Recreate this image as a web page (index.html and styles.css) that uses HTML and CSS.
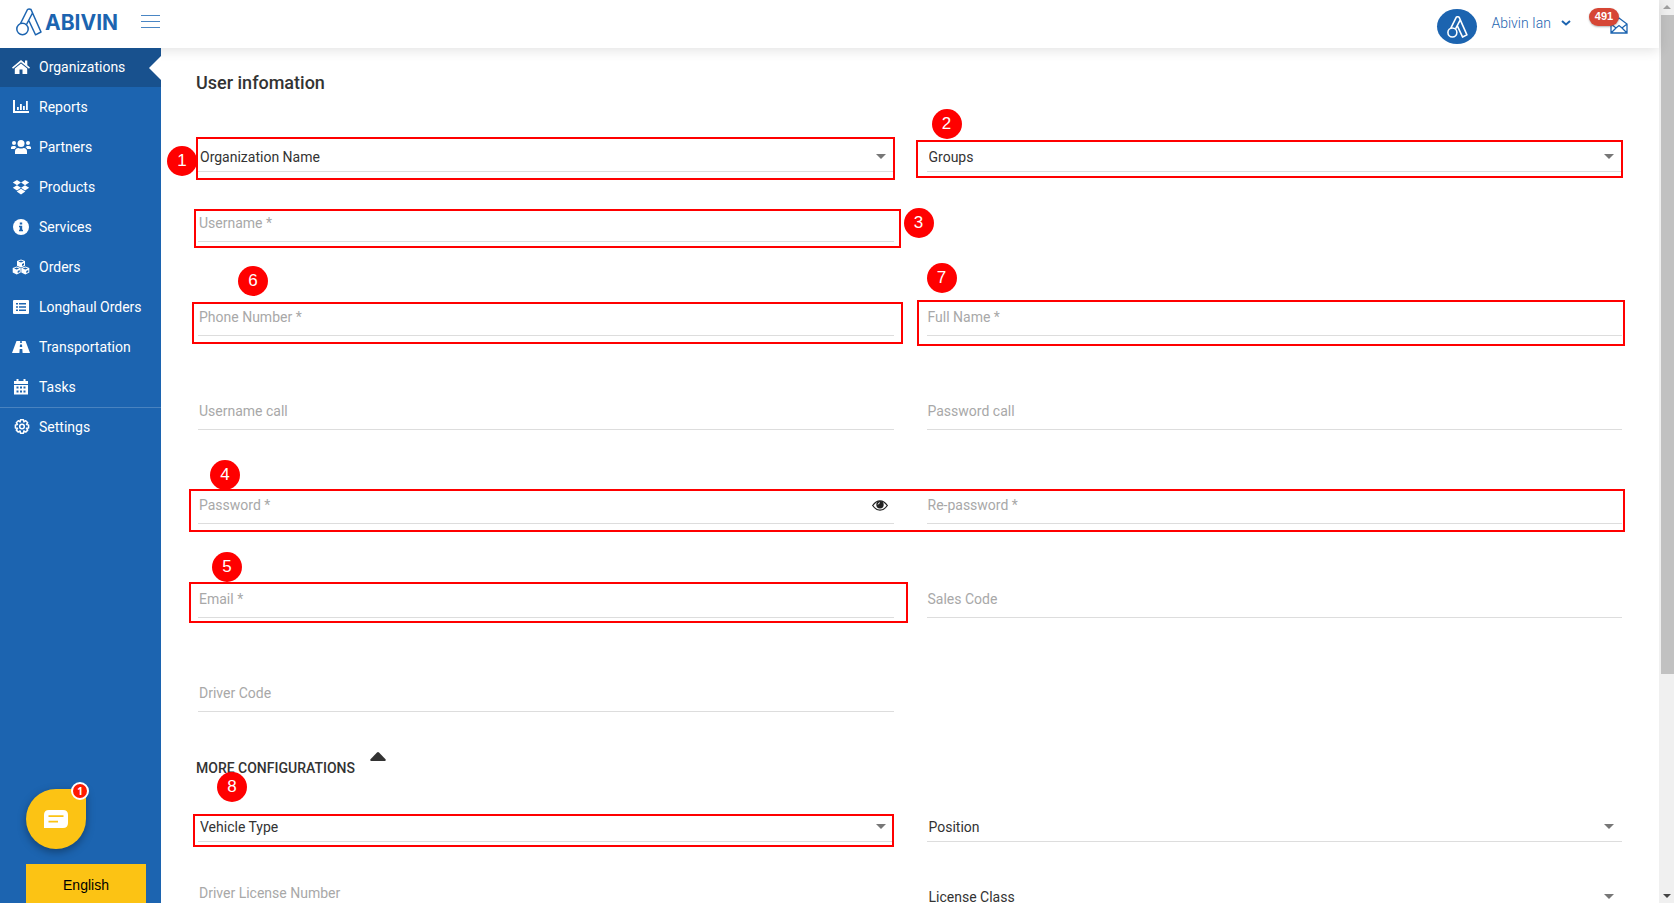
FILE: index.html
```html
<!DOCTYPE html>
<html lang="en">
<head>
<meta charset="utf-8">
<title>Abivin - User information</title>
<link rel="stylesheet" href="styles.css">
</head>
<body>
<div class="page">
  <header class="header">
    <a class="brand" href="#" aria-label="Abivin">
      <svg class="brand-mark" viewBox="0 0 26 28"><g fill="none" stroke="currentColor" stroke-width="1.500" stroke-linejoin="round"><circle cx="6.500" cy="21" r="5.700"/><path d="M4.500 15.500 11.500 1.500q1.500-1.200 3.500 0L25 24l-5.500 2.800L12.800 12.500M16.500 5 10.500 16.500"/></g></svg>
      <span>ABIVIN</span>
    </a>
    <button class="menu-toggle" type="button" aria-label="Toggle menu"><i></i><i></i><i></i></button>
    <div class="account">
      <span class="avatar"><svg viewBox="0 0 26 28"><g fill="none" stroke="currentColor" stroke-width="2" stroke-linejoin="round"><circle cx="6.500" cy="21" r="5.700"/><path d="M4.500 15.500 11.500 1.500q1.500-1.200 3.500 0L25 24l-5.500 2.800L12.800 12.500M16.500 5 10.500 16.500"/></g></svg></span>
      <button class="account-name" type="button">Abivin Ian <svg viewBox="0 0 10 6"><path d="M1 1l4 3.500L9 1" fill="none" stroke="currentColor" stroke-width="2"/></svg></button>
      <button class="inbox" type="button" aria-label="Messages">
        <svg viewBox="0 0 18 17"><path d="M1 7v9h16V7L9 1zM1 7l5 4 3-2.500 3 2.500 5-4M1 16l5-5M17 16l-5-5" fill="none" stroke="currentColor" stroke-width="1.300"/></svg>
        <span class="inbox-count">491</span>
      </button>
    </div>
  </header>

  <nav class="sidebar">
    <a class="nav-item active" href="#"><svg viewBox="0 0 18 16"><path d="M9 1 0 8.500l1 1.200L9 3.200l8 6.500 1-1.200-2.700-2.300V1.500h-2.300v2.700z"/><path d="M9 4.500 2.800 9.500V15h4.700v-4.500h3V15h4.700V9.500z"/></svg>Organizations</a>
    <a class="nav-item" href="#"><svg viewBox="0 0 18 16"><path d="M1 1h2v11h14v2H1zM5 8h1.800v3H5zM8 5h1.800v6H8zM11 7h1.800v4H11zM14 2h1.800v9H14z"/></svg>Reports</a>
    <a class="nav-item" href="#"><svg viewBox="0 0 20 16"><circle cx="10" cy="4.500" r="3.500"/><circle cx="3" cy="4" r="2"/><circle cx="17" cy="4" r="2"/><path d="M4 15v-2.500Q4 9 7.500 9q2.500 1 5 0Q16 9 16 12.500V15zM0 10V8.500Q0 7 2 7h2l1.500 1.200Q4 9 3.700 10zM20 10V8.500Q20 7 18 7h-2l-1.500 1.200q1.500.8 1.800 1.800z"/></svg>Partners</a>
    <a class="nav-item" href="#"><svg viewBox="0 0 18 16"><path d="M5 1l4 2.600L5 6.200.8 3.600zM13 1l4.200 2.600L13 6.200 9 3.600zM.8 8.800L5 6.200l4 2.600-4 2.600zM17.200 8.800L13 6.200 9 8.800l4 2.600zM9 9.700l4.300 2.900L9 15.500l-4.300-2.900z"/></svg>Products</a>
    <a class="nav-item" href="#"><svg viewBox="0 0 18 16"><circle cx="9" cy="8" r="8"/><path class="cut" d="M7.800 3.500h2.400v2H7.800zM7 6.700h3.200v4H11v1.500H7v-1.500h.8V8.200H7z"/></svg>Services</a>
    <a class="nav-item" href="#"><svg viewBox="0 0 18 16"><path d="M9 .5l4 1.600v4.600L9 8.500 5 6.700V2.100zM4.700 7.500l4 1.600v4.500l-4 1.900-4-1.900V9.100zM13.300 7.500l4 1.600v4.500l-4 1.900-4-1.900V9.100z"/><path class="cut" d="M9 1.500l2.700 1L9 3.600l-2.700-1.100zM4.700 8.600l2.600 1-2.600 1-2.600-1zM13.300 8.600l2.600 1-2.600 1-2.600-1zM10 5l2-1v2l-2 1zM5.700 12l2-1v2l-2 1zM14.300 12l2-1v2l-2 1z"/></svg>Orders</a>
    <a class="nav-item" href="#"><svg viewBox="0 0 18 16"><rect x="1" y="1" width="16" height="14" rx="1"/><path class="cut" d="M4 4h2v1.500H4zM7 4h7v1.500H7zM4 7.200h2v1.500H4zM7 7.200h7v1.500H7zM4 10.500h2V12H4zM7 10.500h7V12H7z"/></svg>Longhaul Orders</a>
    <a class="nav-item" href="#"><svg viewBox="0 0 18 16"><path d="M4.500 2h9L18 14h-7.500H7.500H0z"/><path class="cut" d="M8.300 2h1.400l.2 2H8.100zM8 5.500h2l.2 2.500H7.800zM7.700 10h2.600l.3 4H7.400z"/></svg>Transportation</a>
    <a class="nav-item" href="#"><svg viewBox="0 0 18 16"><path d="M2 2h2.500V0h2v2h5V0h2v2H16v3H2zM2 6h14v9.500H2z"/><path class="cut" d="M4.500 7.500h2v2h-2zM8 7.500h2v2H8zM11.500 7.500h2v2h-2zM4.500 11.500h2v2h-2zM8 11.500h2v2H8zM11.500 11.500h2v2h-2z"/></svg>Tasks</a>
    <a class="nav-item divided" href="#"><svg viewBox="0 0 18 16"><g fill="none" stroke="currentColor" stroke-width="1.500" stroke-linejoin="round"><path d="M8.500.8h3l.4 2.100 1.800-1.200 2 2-1.200 1.800 2.100.4v3l-2.100.4 1.200 1.800-2 2-1.800-1.200-.4 2.300h-3l-.4-2.300-1.800 1.200-2-2 1.200-1.800-2.100-.4v-3l2.100-.4-1.200-1.800 2-2 1.800 1.200z"/><circle cx="10" cy="7.500" r="2.300"/></g></svg>Settings</a>
    <div class="sidebar-tools">
      <button class="chat" type="button" aria-label="Chat"><svg viewBox="0 0 24 18"><path fill="#fff" d="M5 0h14q5 0 5 5v8q0 5-5 5H0V5q0-5 5-5z"/><path d="M4.500 6.200h15M4.500 11.700h9.500" stroke="#fcc314" stroke-width="1.800"/></svg><span class="chat-count">1</span></button>
      <button class="language" type="button">English</button>
    </div>
  </nav>

  <main class="content">
    <h1>User infomation</h1>
    <form class="form">
      <div class="row row-first">
        <div class="field select"><select aria-label="Organization Name"><option>Organization Name</option></select><span class="mark mark-1"></span><b class="step step-1">1</b></div>
        <div class="field select"><select aria-label="Groups"><option>Groups</option></select><span class="mark mark-2"></span><b class="step step-2">2</b></div>
      </div>
      <div class="row row-short">
        <div class="field"><label for="username">Username *</label><input id="username" type="text"><span class="mark mark-3"></span><b class="step step-3">3</b></div>
      </div>
      <div class="row">
        <div class="field"><label for="phone">Phone Number *</label><input id="phone" type="tel"><span class="mark mark-6"></span><b class="step step-6">6</b></div>
        <div class="field"><label for="fullname">Full Name *</label><input id="fullname" type="text"><span class="mark mark-7"></span><b class="step step-7">7</b></div>
      </div>
      <div class="row">
        <div class="field"><label for="usercall">Username call</label><input id="usercall" type="text"></div>
        <div class="field"><label for="passcall">Password call</label><input id="passcall" type="text"></div>
      </div>
      <div class="row">
        <div class="field"><label for="password">Password *</label><input id="password" type="password"><button class="reveal" type="button" aria-label="Show password"><svg viewBox="0 0 16 11"><path d="M.7 5.500Q4 .8 8 .8t7.300 4.700Q12 10.200 8 10.200T.7 5.500z" fill="none" stroke="currentColor" stroke-width="1.300"/><circle cx="8" cy="4.800" r="3.700"/><path d="M6 4.500Q6.200 3 8 2.700" fill="none" stroke="#fff" stroke-width=".9"/></svg></button><b class="step step-4">4</b></div>
        <div class="field"><label for="repassword">Re-password *</label><input id="repassword" type="password"></div>
        <span class="mark mark-4"></span>
      </div>
      <div class="row">
        <div class="field"><label for="email">Email *</label><input id="email" type="email"><span class="mark mark-5"></span><b class="step step-5">5</b></div>
        <div class="field"><label for="sales">Sales Code</label><input id="sales" type="text"></div>
      </div>
      <div class="row">
        <div class="field"><label for="driver">Driver Code</label><input id="driver" type="text"></div>
      </div>
      <h2><button class="collapse" type="button">MORE CONFIGURATIONS <svg viewBox="0 0 16 9"><path d="M7 .5q1-.8 2 0l6.500 6.800q.8 1.200-.5 1.700H1q-1.300-.5-.5-1.700z"/></svg></button></h2>
      <div class="row row-short">
        <div class="field select"><select aria-label="Vehicle Type"><option>Vehicle Type</option></select><span class="mark mark-8"></span><b class="step step-8">8</b></div>
        <div class="field select"><select aria-label="Position"><option>Position</option></select></div>
      </div>
      <div class="row row-short">
        <div class="field"><label for="license">Driver License Number</label><input id="license" type="text"></div>
        <div class="field select"><select aria-label="License Class"><option>License Class</option></select></div>
      </div>
    </form>
  </main>

  <div class="scrollbar" aria-hidden="true"><i class="arrow-up"></i><span class="thumb"></span><i class="arrow-down"></i></div>
</div>
</body>
</html>
```

FILE: styles.css
```css
* { box-sizing: border-box; }
body { margin: 0; font-family: Roboto, "Liberation Sans", sans-serif; font-size: 14px; color: #333; background: #fff; }
button { font: inherit; color: inherit; background: none; border: 0; padding: 0; }
a { color: inherit; text-decoration: none; }
svg { display: block; fill: currentColor; flex: none; }

.page {
  display: grid;
  grid-template: 48px 1fr / 161px 1fr 15px;
  height: 100vh;
  overflow: hidden;
}

/* Header */
.header {
  grid-area: 1 / 1 / 2 / 3;
  display: flex;
  z-index: 2;
  background: #fff;
  color: #1c64b0;
  box-shadow: 0 2px 12px rgba(0, 0, 0, .12);
}
.sidebar { z-index: 3; }
.brand { display: flex; align-items: center; gap: 3px; height: 44px; padding-left: 16px; font: 700 21px Inter, sans-serif; }
.brand-mark { width: 26px; height: 28px; }
.menu-toggle { display: flex; flex-direction: column; gap: 5px; width: 19px; margin: 15px 0 0 23px; }
.menu-toggle i { height: 1px; background: #4a86c4; }
.account { display: flex; margin-left: auto; padding-right: 31px; }
.avatar { display: grid; place-items: center; width: 40px; height: 35px; margin: 9px 14px 0 0; border-radius: 50%; background: #1c64b0; color: #fff; }
.avatar svg { width: 23px; height: 22px; }
.account-name { display: flex; align-items: center; gap: 10px; height: 46px; font-weight: 300; }
.account-name svg { width: 10px; height: 6px; }
.inbox { position: relative; width: 18px; height: 17px; margin: 17px 0 0 39px; }
.inbox-count { position: absolute; right: 9px; top: -9px; width: 30px; height: 18px; border-radius: 9px; background: #d64635; color: #fff; font: 700 11px/17px "Liberation Sans", sans-serif; box-shadow: 0 1px 2px rgba(0, 0, 0, .3); }

/* Sidebar */
.sidebar { grid-area: 2 / 1; display: flex; flex-direction: column; background: #1c64b0; color: #fff; }
.nav-item { display: flex; align-items: center; gap: 8px; height: 40px; padding-left: 11px; }
.nav-item svg { width: 20px; height: 16px; }
.nav-item .cut { fill: #1c64b0; }
.nav-item.active { position: relative; height: 39px; padding-bottom: 2px; background: #18518e; }
.nav-item.active::after { content: ""; position: absolute; right: 0; top: 8px; border: 12px solid transparent; border-left: 0; border-right-color: #fff; }
.nav-item.divided { padding-bottom: 2px; border-top: 1px solid #4983c0; }
.sidebar-tools { margin-top: auto; padding-left: 26px; }
.chat { position: relative; display: grid; place-items: center; width: 60px; height: 60px; border-radius: 50% 4px 50% 50%; background: #fcc314; box-shadow: 0 3px 8px rgba(0, 0, 0, .35); }
.chat svg { width: 24px; height: 18px; }
.chat-count { position: absolute; right: -3px; top: -7px; width: 18px; height: 18px; border: 2px solid #fff; border-radius: 50%; background: #ff1a00; color: #fff; font: 700 10px/14px "Open Sans", sans-serif; }
.language { width: 120px; height: 39px; margin-top: 15px; padding-top: 3px; background: #fcc314; color: #000; font: 14px "Liberation Sans", sans-serif; }

/* Form */
.content { grid-area: 2 / 2; min-height: 0; overflow: hidden; padding: 0 35px; }
h1 { margin: 23px 0 0; font-size: 18px; line-height: 24px; font-weight: 500; }
.form { padding: 0 2px; }
.row { position: relative; display: grid; grid-template-columns: 1fr 1fr; column-gap: 33px; align-items: end; height: 94px; }
.row-first { height: 77px; }
.row-short { height: 70px; }
.field { position: relative; height: 40px; }
.field label { position: absolute; left: 1px; top: 11px; line-height: 20px; color: #a8a8a8; }
.field input,
.field select { display: block; width: 100%; height: 40px; margin: 0; border: 0; border-bottom: 1px solid #ddd; border-radius: 0; outline: 0; background: none; font: inherit; color: inherit; }
.field input { padding: 10px 1px 0; }
.field select { appearance: none; padding: 10px 20px 0 2px; }
.select::after { content: ""; position: absolute; right: 8px; top: 22px; border: 5px solid transparent; border-top-color: #777; border-bottom: 0; }
.reveal { position: absolute; right: 6px; top: 16px; color: #222; }
.reveal svg { width: 16px; height: 11px; }
h2 { height: 60px; margin: 0 0 0 -2px; padding-top: 40px; font-size: 14px; }
.collapse { display: flex; gap: 15px; line-height: 32px; font-weight: 500; }
.collapse svg { width: 16px; height: 9px; }

/* Numbered callouts */
.mark { position: absolute; border: 2px solid #f00; pointer-events: none; }
.mark-1 { inset: 5px -1px -8px -2px; }
.mark-2 { inset: 8px -1px -6px -11px; }
.mark-3 { inset: 7px -7px -6px -4px; }
.mark-4 { inset: 59px -3px -8px -9px; }
.mark-5 { inset: 4px -14px -5px -9px; }
.mark-6 { inset: 6px -9px -8px -6px; }
.mark-7 { inset: 4px -3px -10px -10px; }
.mark-8 { inset: 12px 0 -5px -5px; }
.step { position: absolute; width: 30px; height: 30px; border-radius: 50%; background: #f00; color: #fff; text-align: center; font: 17px/29px "Liberation Sans", sans-serif; }
.step-1 { left: -31px; top: 14px; }
.step-2 { left: 5px; top: -23px; }
.step-3 { right: -40px; top: 6px; }
.step-4 { left: 12px; top: -24px; }
.step-5 { left: 14px; top: -26px; }
.step-6 { left: 40px; top: -30px; }
.step-7 { left: 0; top: -33px; }
.step-8 { left: 19px; top: -30px; }

/* Scrollbar */
.scrollbar { grid-area: 1 / 3 / 3 / 4; display: flex; flex-direction: column; align-items: center; background: #f0f0f0; }
.arrow-up, .arrow-down { border: 4px solid transparent; }
.arrow-up { margin-top: 5px; border-top: 0; border-bottom-color: #a0a0a0; }
.thumb { align-self: stretch; height: 73%; margin: 6px 0 0 2px; background: #c1c1c1; }
.arrow-down { margin: auto 0 5px; border-bottom: 0; border-top-color: #444; }
```
